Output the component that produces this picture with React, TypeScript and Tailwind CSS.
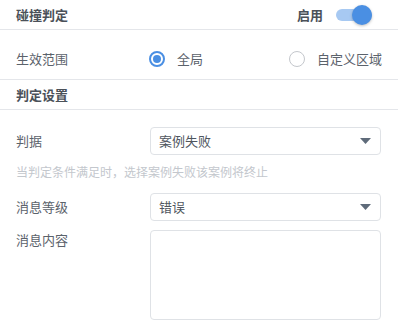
import { useState } from 'react'

const FONT = { fontFamily: '"Noto Sans CJK SC", "Noto Sans", sans-serif' }

function Caret() {
  return (
    <svg width="11" height="6" viewBox="0 0 11 6" className="shrink-0">
      <path d="M0 0 L11 0 L5.5 6 Z" fill="#5f6b7a" />
    </svg>
  )
}

function Radio({ checked, label }: { checked: boolean, label: string }) {
  return (
    <label className="flex items-center gap-[12px] cursor-pointer">
      <span
        className={
          checked
            ? 'flex size-[16px] items-center justify-center rounded-full border-[2px] border-[#4a8fe3] bg-white'
            : 'flex size-[16px] items-center justify-center rounded-full border-[1.5px] border-[#c4c7cc] bg-white'
        }
      >
        {checked && <span className="size-[8px] rounded-full bg-[#4a8fe3]" />}
      </span>
      <span className="text-[13px] leading-[20px] text-[#5b626b]">{label}</span>
    </label>
  )
}

function Select({ value }: { value: string }) {
  return (
    <div className="flex h-[28px] flex-1 items-center justify-between rounded-[4px] border border-[#dfe2e6] bg-white pl-[8px] pr-[9px]">
      <span className="text-[13px] leading-[20px] text-[#4f565e]">{value}</span>
      <Caret />
    </div>
  )
}

export default function App() {
  const [enabled, setEnabled] = useState(true)

  return (
    <div className="h-[336px] w-[398px] bg-white" style={FONT}>
      <div className="flex h-[30px] items-center justify-between border-b border-[#e4e6ea] pl-[16px] pr-[26px]">
        <span className="text-[13px] font-bold text-[#4b5159]">碰撞判定</span>
        <div className="flex items-center gap-[13px]">
          <span className="text-[13px] font-bold text-[#4b5159]">启用</span>
          <button
            onClick={() => setEnabled(!enabled)}
            className="relative h-[12px] w-[36px] rounded-full bg-[#a7c9f2]"
          >
            <span className="absolute right-0 top-[-4px] size-[20px] rounded-full bg-[#4a8fe3] shadow-[0_1px_3px_rgba(0,0,0,0.25)]" />
          </button>
        </div>
      </div>

      <div className="flex items-center border-b border-[#e4e6ea] pb-[10px] pl-[16px] pr-[16px] pt-[19px]">
        <span className="w-[133px] text-[13px] leading-[20px] text-[#5b626b]">生效范围</span>
        <div className="flex flex-1 items-center justify-between">
          <Radio checked label="全局" />
          <Radio checked={false} label="自定义区域" />
        </div>
      </div>

      <div className="flex h-[30px] items-center border-b border-[#e4e6ea] pl-[16px] pt-[1px]">
        <span className="text-[13px] font-bold text-[#4b5159]">判定设置</span>
      </div>

      <div className="flex flex-col pl-[16px] pr-[17px] pt-[17px]">
        <div className="flex items-center">
          <span className="w-[134px] text-[13px] leading-[20px] text-[#5b626b]">判据</span>
          <Select value="案例失败" />
        </div>
        <p className="mt-[8px] text-[12px] leading-[18px] text-[#c3c7cd]">
          当判定条件满足时，选择案例失败该案例将终止
        </p>
        <div className="mt-[12px] flex items-center">
          <span className="w-[134px] text-[13px] leading-[20px] text-[#5b626b]">消息等级</span>
          <Select value="错误" />
        </div>
        <div className="mt-[9px] flex items-start">
          <span className="w-[134px] text-[13px] leading-[20px] text-[#5b626b]">消息内容</span>
          <textarea className="h-[90px] flex-1 resize-none rounded-[4px] border border-[#dfe2e6] bg-white outline-none" />
        </div>
      </div>
    </div>
  )
}
